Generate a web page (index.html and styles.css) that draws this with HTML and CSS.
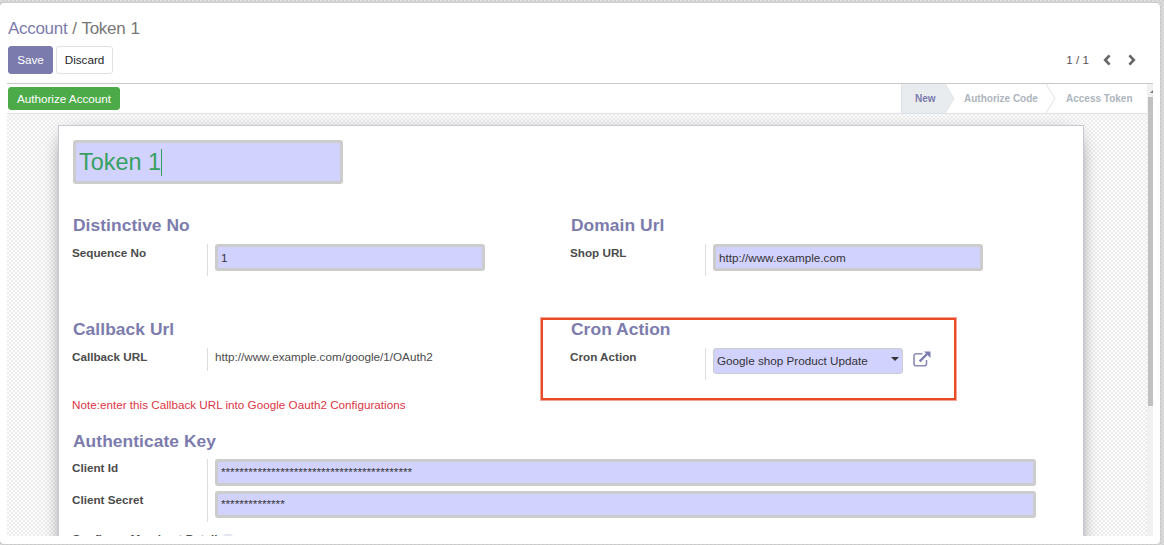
FILE: index.html
```html
<!DOCTYPE html>
<html lang="en">
<head>
<meta charset="utf-8">
<title>Account / Token 1</title>
<link rel="stylesheet" href="styles.css">
</head>
<body>
<div class="panel">
  <header class="control">
    <div class="breadcrumb"><a class="crumb">Account</a> / Token 1</div>
    <div class="actions">
      <button class="btn primary">Save</button>
      <button class="btn plain">Discard</button>
      <div class="pager">
        <span class="count">1 / 1</span>
        <svg class="chev" viewBox="0 0 8 12"><path d="M6.6 1.4 2.2 6l4.4 4.6"/></svg>
        <svg class="chev" viewBox="0 0 8 12"><path d="M1.4 1.4 5.8 6l-4.4 4.6"/></svg>
      </div>
    </div>
  </header>
  <div class="view">
    <div class="main">
      <div class="statusbar">
        <button class="btn success">Authorize Account</button>
        <div class="stages">
          <span class="stage current">New</span>
          <svg class="arrow filled" viewBox="0 0 10 29"><path class="fill" d="M0 0 9 14.5 0 29z"/><path class="line" d="M0 0 9 14.5 0 29"/></svg>
          <span class="stage code">Authorize Code</span>
          <svg class="arrow" viewBox="0 0 10 29"><path class="line" d="M0 0 9 14.5 0 29"/></svg>
          <span class="stage token">Access Token</span>
        </div>
      </div>
      <div class="backdrop">
        <div class="sheet">
          <div class="input title">Token 1<span class="caret"></span></div>
          <div class="pair first">
            <section class="group">
              <h2>Distinctive No</h2>
              <div class="row"><label>Sequence No</label><div class="cell"><div class="input">1</div></div></div>
            </section>
            <section class="group">
              <h2>Domain Url</h2>
              <div class="row"><label>Shop URL</label><div class="cell"><div class="input">http://www.example.com</div></div></div>
            </section>
          </div>
          <div class="pair second">
            <section class="group">
              <h2>Callback Url</h2>
              <div class="row short"><label>Callback URL</label><div class="cell">http://www.example.com/google/1/OAuth2</div></div>
              <p class="note">Note:enter this Callback URL into Google Oauth2 Configurations</p>
            </section>
            <section class="group marked">
              <h2>Cron Action</h2>
              <div class="row"><label>Cron Action</label><div class="cell picker">
                <div class="select">Google shop Product Update<span class="down"></span></div>
                <svg class="external" viewBox="0 0 18 16"><path class="box" d="M9.500 2.700H3A2 2 0 0 0 1 4.700v8A2 2 0 0 0 3 14.700h8.500a2 2 0 0 0 2-2V9"/><path class="shaft" d="M6.700 10.300 14 3"/><path class="head" d="M11 .5h6.500V7z"/></svg>
              </div></div>
            </section>
          </div>
          <section class="group wide">
            <h2>Authenticate Key</h2>
            <div class="row"><label>Client Id</label><div class="cell"><div class="input">******************************************</div></div></div>
            <div class="row secret"><label>Client Secret</label><div class="cell"><div class="input">**************</div></div></div>
            <div class="option"><label>Configure Merchant Details</label><span class="check"></span></div>
          </section>
        </div>
      </div>
    </div>
    <div class="scroll"><span class="up"></span><div class="thumb"></div></div>
  </div>
</div>
</body>
</html>
```
FILE: styles.css
```css
*, *::after { box-sizing: border-box; }
body {
  margin: 0;
  height: 545px;
  overflow: hidden;
  padding-top: 3px;
  background: repeating-conic-gradient(#d2d2d2 0 25%, #dedede 0 50%) 0 0 / 4px 4px;
  font: 11.7px/16px "Liberation Sans", Arial, sans-serif;
  color: #4c4c4c;
}
.panel {
  width: 1160px;
  height: 541px;
  padding: 0 7px;
  background: #fff;
  border-radius: 4px;
  box-shadow: 0 0 2px #aaa;
}
.control { height: 80px; padding: 14px 1px 0; }
.breadcrumb { height: 29px; font-size: 17px; line-height: 23px; letter-spacing: -0.3px; word-spacing: 0.6px; color: #777; }
.crumb { color: #7c7bad; }
.actions { display: flex; gap: 3px; }
.btn {
  display: flex;
  align-items: center;
  justify-content: center;
  padding: 0;
  border: 1px solid;
  border-radius: 3px;
  font: inherit;
  white-space: nowrap;
}
.primary { width: 45px; height: 28px; background: #7c7bad; border-color: #7c7bad; color: #fff; }
.plain { width: 57px; height: 28px; background: #fff; border-color: #dee2e6; color: #212529; }
.success { width: 112px; height: 23px; background: #4caa49; border-color: #4caa49; color: #fff; }
.pager { display: flex; align-items: center; margin: 0 16px 0 auto; color: #555; }
.count { margin-right: 14px; }
.chev { width: 8px; height: 12px; margin-right: 17px; fill: none; stroke: #666; stroke-width: 2.6; }
.chev:last-child { margin-right: 0; }
.view { display: flex; height: 453px; border-top: 1px solid #c8c8c8; overflow: hidden; }
.main { width: 1140px; }
.statusbar {
  display: flex;
  justify-content: space-between;
  height: 30px;
  padding: 3px 0 0 1px;
  border-bottom: 1px solid #dee2e6;
}
.stages { display: flex; height: 29px; margin-top: -3px; font-size: 10px; font-weight: bold; line-height: 29px; color: #adb5bd; }
.current { width: 44px; padding-left: 13px; border-left: 1px solid #dee2e6; background: #e9ecef; color: #7c7bad; }
.code { width: 91px; padding-left: 9px; }
.token { width: 91px; padding-left: 10px; }
.arrow { width: 10px; height: 29px; }
.arrow .line { fill: none; stroke: #dee2e6; }
.arrow .fill { fill: #e9ecef; }
.backdrop {
  height: 422px;
  overflow: hidden;
  padding: 11px 0 0 51px;
  background: repeating-conic-gradient(#eeeeee 0 25%, #fbfbfb 0 50%) 0 0 / 4px 4px;
}
.sheet {
  width: 1026px;
  height: 460px;
  padding: 14px 15px 0 14px;
  background: #fff;
  border: 1px solid #c8c8d3;
  box-shadow: 0 5px 20px -10px #000;
}
.input {
  height: 27px;
  padding-left: 3px;
  border: 3px solid #ccc;
  border-radius: 3px;
  background: #d2d2ff;
  line-height: 21px;
}
.title { display: flex; align-items: center; width: 270px; height: 44px; font-size: 23.4px; color: #37a060; }
.caret { width: 1px; height: 27px; background: #37a060; }
.pair { display: grid; grid-template-columns: 498px 498px; }
.first { height: 104px; margin-top: 30px; }
.second { height: 112px; }
h2 { margin: 0; height: 29px; padding-top: 1px; font-size: 17.4px; line-height: 20px; letter-spacing: 0.06px; color: #7c7bad; }
.pair h2 { height: 30px; }
.row { display: flex; height: 32px; }
.row > label { width: 136px; margin-left: -1px; border-right: 1px solid #ddd; font-weight: bold; line-height: 18px; }
.pair .row > label { line-height: 17px; }
.cell { width: 270px; margin-left: 7px; line-height: 18px; color: #333; }
.picker { display: flex; }
.short { height: 23px; }
.short .cell { white-space: nowrap; line-height: 17px; color: #4c4c4c; }
.note { margin: 25px 0 0 -1px; line-height: 18px; color: #dc3545; }
.marked { position: relative; }
.marked::after {
  content: "";
  position: absolute;
  left: -30px;
  top: 0;
  width: 415px;
  height: 82px;
  border: 2px solid #ea4a26;
  box-shadow: 0 0 0 1px #f5a593;
}
.select {
  display: flex;
  align-items: center;
  justify-content: space-between;
  width: 190px;
  height: 26px;
  padding: 0 3px;
  border: 1px solid #ccc;
  border-radius: 3px;
  background: #d2d2ff;
}
.down { margin-bottom: 4px; border: 4px solid transparent; border-top-color: #333; border-bottom: 0; }
.external { width: 18px; height: 16px; margin: 3px 0 0 10px; }
.external .box { fill: none; stroke: #8b8ab9; stroke-width: 1.6; }
.external .shaft { stroke: #7c7bad; stroke-width: 2.4; }
.external .head { fill: #7c7bad; }
.wide .cell { width: 821px; }
.wide .input { line-height: 20px; }
.secret { height: 31px; }
.option { display: flex; margin: 9px 0 0 -1px; font-weight: bold; }
.check { width: 10px; height: 10px; margin: 3px 0 0 -1px; border-radius: 3px; background: #e4e6ee; }
.scroll { width: 6px; overflow: hidden; background: #f1f1f1; }
.up { display: block; width: 0; margin: 6px 0 4px 3px; border: 3px solid transparent; border-bottom-color: #777; border-top: 0; }
.thumb { height: 309px; margin-left: 1px; background: #c1c1c1; }
```
